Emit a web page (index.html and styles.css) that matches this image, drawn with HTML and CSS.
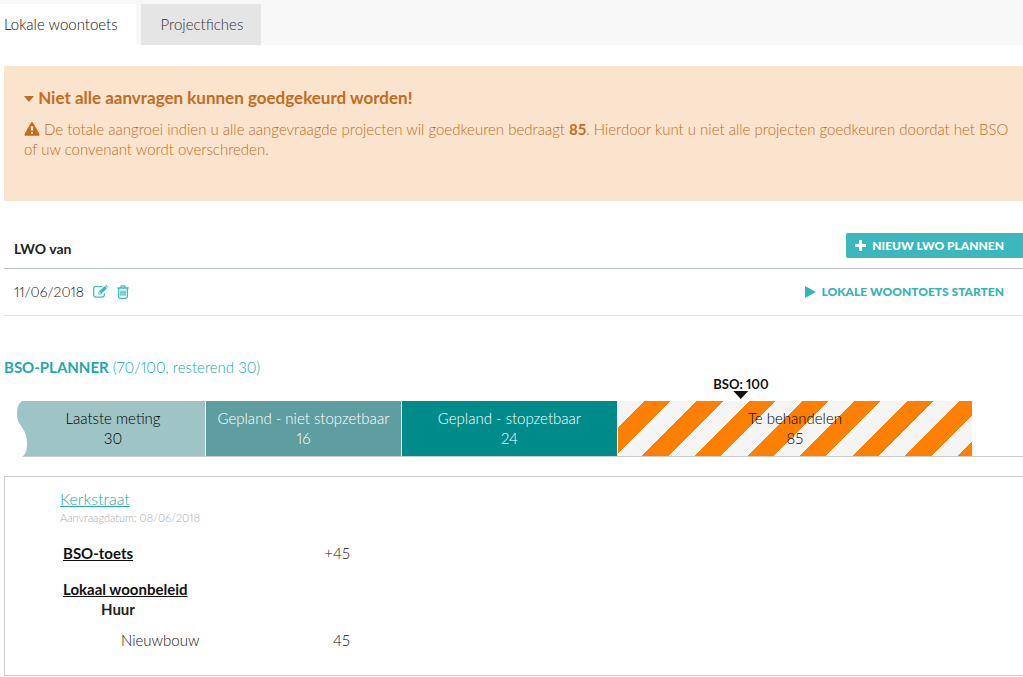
FILE: index.html
```html
<!DOCTYPE html>
<html lang="nl">
<head>
<meta charset="utf-8">
<title>Lokale woontoets</title>
<link rel="stylesheet" href="styles.css">
</head>
<body>
<nav class="tabs">
  <a class="tab tab-active" href="#woontoets">Lokale woontoets</a>
  <a class="tab" href="#projectfiches">Projectfiches</a>
</nav>
<main class="page">
  <section class="alert">
    <h2 class="alert-title">
      <svg class="caret" viewBox="0 0 10 6" aria-hidden="true"><path d="M0 0h10L5 6z"/></svg>
      Niet alle aanvragen kunnen goedgekeurd worden!
    </h2>
    <p class="alert-text"><svg class="warning" viewBox="0 0 16 15" aria-hidden="true"><path fill-rule="evenodd" d="M8 0q.8 0 1.200.700l6.600 12q.4.700 0 1.400-.4.700-1.200.700H1.400q-.8 0-1.200-.7-.4-.7 0-1.400l6.600-12Q7.200 0 8 0zM6.600 4.500l.3 5h2.200l.3-5zM6.900 10.600v2h2.200v-2z"/></svg> De totale aangroei indien u alle aangevraagde projecten wil goedkeuren bedraagt <strong>85</strong>. Hierdoor kunt u niet alle projecten goedkeuren doordat het BSO of uw convenant wordt overschreden.</p>
  </section>

  <table class="lwo">
    <thead>
      <tr>
        <th scope="col">LWO van</th>
        <td class="lwo-action"><button class="btn btn-primary" type="button"><svg class="plus" viewBox="0 0 11 11" aria-hidden="true"><path d="M4 0h3v4h4v3H7v4H4V7H0V4h4z"/></svg>Nieuw LWO plannen</button></td>
      </tr>
    </thead>
    <tbody>
      <tr>
        <td>
          <div class="lwo-date">
            <span>11/06/2018</span>
            <button class="icon-btn" type="button" aria-label="Bewerken"><svg class="edit" viewBox="0 0 16 14" aria-hidden="true"><path class="line" d="M10 1.600H3.200Q.7 1.600.7 4v6.600q0 2.400 2.500 2.400h6.600q2.400 0 2.400-2.400V9"/><path fill-rule="evenodd" d="M12.500 1l2.500 2.500-6.800 6.800H5.700V7.800zM6.700 8.200v1.100h1.100l.6-.6-1.100-1.100zM13 .5l.6-.3q.5-.2.900.1l1.200 1.200q.4.500.1 1l-.4.500z"/></svg></button>
            <button class="icon-btn" type="button" aria-label="Verwijderen"><svg class="trash" viewBox="0 0 12 14" aria-hidden="true"><path class="line" d="M.3 3h11.400M3.700 3l.7-2.200h3.200L8.300 3M1.700 3v8.800q0 1.500 1.300 1.500h6q1.300 0 1.300-1.500V3M4 5.500v5.200M6 5.500v5.200M8 5.500v5.200"/></svg></button>
          </div>
        </td>
        <td class="lwo-action"><button class="btn" type="button"><svg class="play" viewBox="0 0 11 12" aria-hidden="true"><path d="M0 0l11 6-11 6z"/></svg>Lokale woontoets starten</button></td>
      </tr>
    </tbody>
  </table>

  <h2 class="planner-title"><strong>BSO-PLANNER</strong> (70/100, resterend 30)</h2>
  <div class="planner">
    <div class="track">
      <div class="segment measured"><svg class="wave" viewBox="0 0 11 56" preserveAspectRatio="none" aria-hidden="true"><path d="M0 0H5C1 3 0 8 0 13C0 26 10 26 10 42C10 49 9 53 5 56H0z"/></svg><span>Laatste meting</span><span>30</span></div>
      <div class="segment fixed"><span>Gepland - niet stopzetbaar</span><span>16</span></div>
      <div class="segment stoppable"><span>Gepland - stopzetbaar</span><span>24</span></div>
      <div class="segment pending"><span>Te behandelen</span><span>85</span></div>
      <div class="marker"><span>BSO: 100</span><svg class="pointer" viewBox="0 0 15 8" aria-hidden="true"><path d="M0 0h15L7.500 8z"/></svg></div>
    </div>
  </div>

  <section class="project">
    <a class="project-name" href="#kerkstraat">Kerkstraat</a>
    <p class="project-date">Aanvraagdatum: 08/06/2018</p>
    <table class="figures">
      <tbody>
        <tr class="total"><th scope="row">BSO-toets</th><td>+45</td></tr>
        <tr class="group"><th scope="row" colspan="2">Lokaal woonbeleid</th></tr>
        <tr class="kind"><th scope="row" colspan="2">Huur</th></tr>
        <tr class="item"><th scope="row">Nieuwbouw</th><td>45</td></tr>
      </tbody>
    </table>
  </section>
</main>
</body>
</html>
```
FILE: styles.css
```css
* { box-sizing: border-box; }
body {
  margin: 0;
  background: #fff;
  color: #111;
  font: 300 15px/20px Lato, "Open Sans", sans-serif;
  font-variant-numeric: proportional-nums;
  overflow-x: hidden;
}
h2, p { margin: 0; }
strong { font-weight: 700; }
svg { fill: currentColor; overflow: visible; }
button { font-family: inherit; cursor: pointer; }

.tabs { display: flex; gap: 5px; padding-top: 4px; background: #f8f8f8; }
.tab { padding: 10px 18px 11px 20px; background: #e5e5e5; color: #333; text-decoration: none; }
.tab-active { padding-left: 4px; background: #fff; color: #111; }

.page { padding: 21px 0 0 4px; }
.alert { min-height: 135px; padding: 22px 14px 22px 20px; background: #fbe4cd; color: #c36c1e; border-radius: 2px 0 0 2px; }
.alert-title { margin-bottom: 11px; font-size: 17px; line-height: 20px; font-weight: 700; }
.caret { width: 10px; height: 6px; vertical-align: 2px; }
.warning { width: 16px; height: 14px; vertical-align: -1px; }

.lwo { width: 100%; margin-top: 25px; border-collapse: collapse; }
.lwo th, .lwo td { height: 47px; padding: 0 0 0 10px; text-align: left; border-bottom: 1px solid #e2e2e2; }
.lwo thead th, .lwo thead td { height: 42px; border-bottom-color: #b8c0bf; }
.lwo thead th { color: #222; padding-top: 4px; font-size: 14px; }
.lwo thead .lwo-action { padding-bottom: 3px; }
.lwo .lwo-action { text-align: right; }
.lwo-date { display: flex; align-items: center; gap: 9px; font-size: 14px; }
.icon-btn { display: flex; padding: 0; border: 0; background: none; color: #3cb8bc; }
.edit { width: 15px; height: 13px; }
.trash { width: 12px; height: 14px; }
.line { fill: none; stroke: currentColor; stroke-width: 1.3; }
.btn {
  display: inline-flex;
  align-items: center;
  gap: 6px;
  height: 25px;
  padding: 0 19px 0 9px;
  border: 0;
  border-radius: 2px 0 0 2px;
  background: none;
  color: #34b3b8;
  font-size: 12px;
  font-weight: 900;
  text-transform: uppercase;
}
.btn-primary { background: #3bb7bd; color: #fff; }
.plus { width: 11px; height: 11px; }
.play { width: 11px; height: 12px; }

.planner-title { margin: 41px 0 24px; color: #22a8a8; font-size: 15px; line-height: 20px; font-weight: 300; }
.planner { margin-left: 13px; padding-right: 51px; border-bottom: 1px solid #ccc; }
.track { position: relative; display: grid; grid-template-columns: 189fr 196fr 216fr 354fr; }
.segment { position: relative; display: flex; flex-direction: column; align-items: center; padding: 7px 0 8px; border-right: 1px solid #fff; color: #fff; }
.measured { background: #9fc4c5; color: #000; padding-left: 4px; }
.fixed { background: #5f9ea0; }
.stoppable { background: #008b8b; }
.pending {
  border-right: 0;
  color: #000;
  background: repeating-linear-gradient(135deg, #f5f5f5 0 6.43%, #ff8000 6.43% 12.86%);
}
.wave { position: absolute; left: 0; top: 0; width: 11px; height: 56px; fill: #fff; }
.marker {
  position: absolute;
  left: 75.8%;
  bottom: 100%;
  display: flex;
  flex-direction: column;
  align-items: center;
  transform: translateX(-50%);
  padding-bottom: 2px;
  color: #111;
  font-size: 13px;
  line-height: 14px;
  font-weight: 700;
}
.pointer { width: 15px; height: 8px; }

.project { margin-top: 19px; padding: 12px 55px 25px; border: 1px solid #ccc; border-right: 0; }
.project-name { color: #22a8a8; font-size: 16px; line-height: 20px; }
.project-date { color: #aaa; font-size: 11px; line-height: 18px; }
.figures { width: 292px; margin-top: 16px; border-collapse: collapse; }
.figures th, .figures td { padding: 0 2px 0 3px; text-align: left; line-height: 20px; }
.figures td { text-align: right; }
.total th, .group th { color: #111; text-decoration: underline; }
.group th { padding-top: 16px; }
.figures .kind th { padding-left: 41px; color: #222; }
.figures .item th, .figures .item td { padding-top: 11px; }
.figures .item th { padding-left: 61px; font-weight: 300; }
```
